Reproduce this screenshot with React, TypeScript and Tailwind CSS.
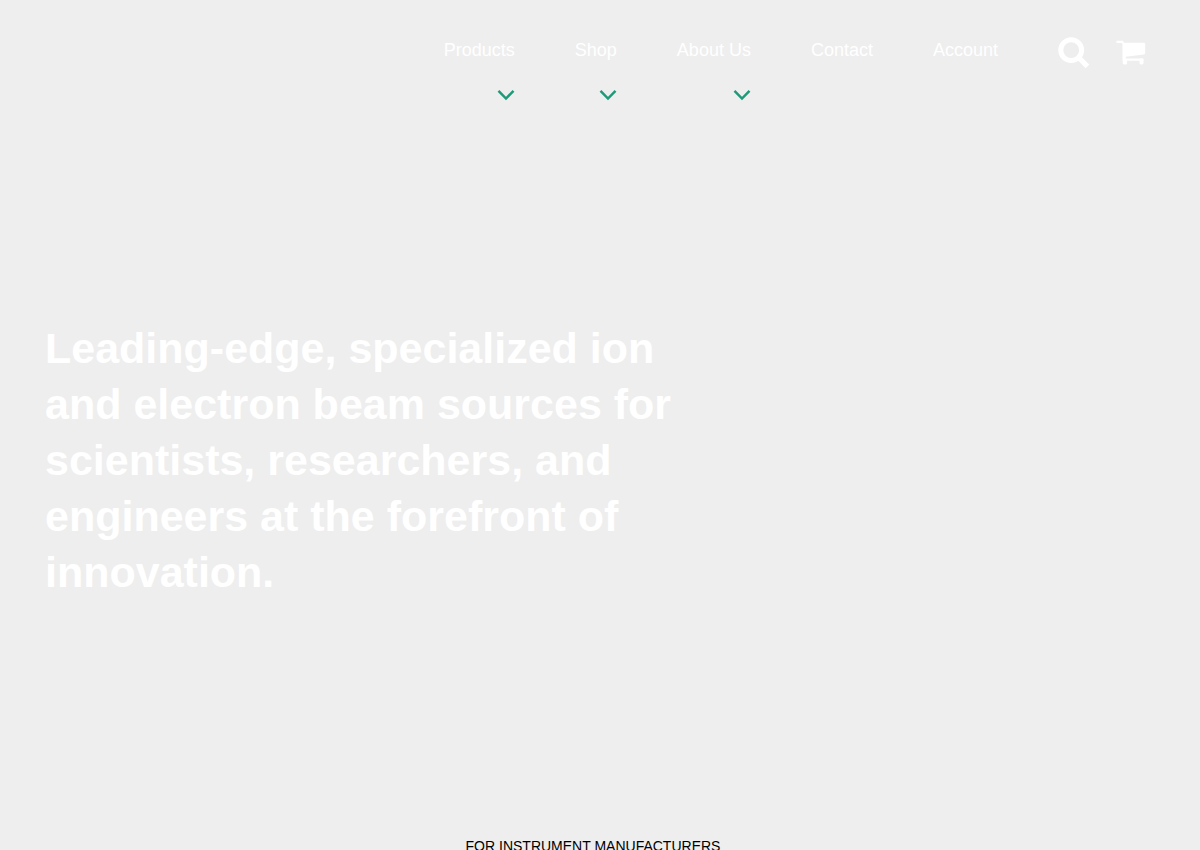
const links = [
  { label: "Products", menu: true },
  { label: "Shop", menu: true },
  { label: "About Us", menu: true },
  { label: "Contact", menu: false },
  { label: "Account", menu: false },
];

function Chevron() {
  return (
    <svg viewBox="0 0 18 12" className="h-3 w-[18px]" fill="none" stroke="#1f9a78" strokeWidth="2.5" aria-hidden="true">
      <path d="M1.500 1.800 9 9.500l7.500-7.700" />
    </svg>
  );
}

function Search() {
  return (
    <svg viewBox="0 0 32 32" className="size-8" fill="none" stroke="currentColor" aria-hidden="true">
      <circle cx="13.200" cy="13.200" r="10.400" strokeWidth="5" />
      <path d="M20.500 20.500 29.500 29.300" strokeWidth="5.200" />
    </svg>
  );
}

function Cart() {
  return (
    <svg viewBox="0 0 30 26" className="h-[26px] w-[30px]" fill="currentColor" aria-hidden="true">
      <path d="M0.500 0.800H7l1 2h20q1.200 0 1.200 1.200v9q0 1.200-1.200 1.400L9.800 16.800v1.700H26.500q1 0 1 1V20.800H7.500q-1 0-1-1V4.500L5.800 3H0.500z" />
      <rect x="6.700" y="18.500" width="4.400" height="6" rx="1.400" />
      <rect x="23.500" y="18.500" width="4" height="6" rx="1.400" />
    </svg>
  );
}

export default function App() {
  return (
    <div className="min-h-screen bg-[#eeeeee] font-['Liberation_Sans',Arial,sans-serif] text-white">
      <header className="flex items-start justify-end pt-9 pr-[54px]">
        <nav aria-label="Main">
          <ul className="flex gap-[60px]">
            {links.map((link) => (
              <li key={link.label} className="flex flex-col items-end gap-[25px]">
                <a href="#" className="text-lg leading-7">{link.label}</a>
                {link.menu && (
                  <button type="button" aria-label={`Open ${link.label} menu`}>
                    <Chevron />
                  </button>
                )}
              </li>
            ))}
          </ul>
        </nav>
        <button type="button" aria-label="Search" className="mt-px ml-[60px]">
          <Search />
        </button>
        <a href="#" aria-label="Cart" className="mt-1 ml-[26px]">
          <Cart />
        </a>
      </header>
      <main>
        <section className="px-[45px] pt-[219px] pb-[236px]">
          <h1 className="max-w-[660px] text-[43px] leading-[56px] font-bold">
            Leading-edge, specialized ion and electron beam sources for scientists, researchers, and engineers at the forefront of innovation.
          </h1>
        </section>
        <p className="pr-[14px] text-center text-sm leading-5 text-black">FOR INSTRUMENT MANUFACTURERS</p>
      </main>
    </div>
  );
}
